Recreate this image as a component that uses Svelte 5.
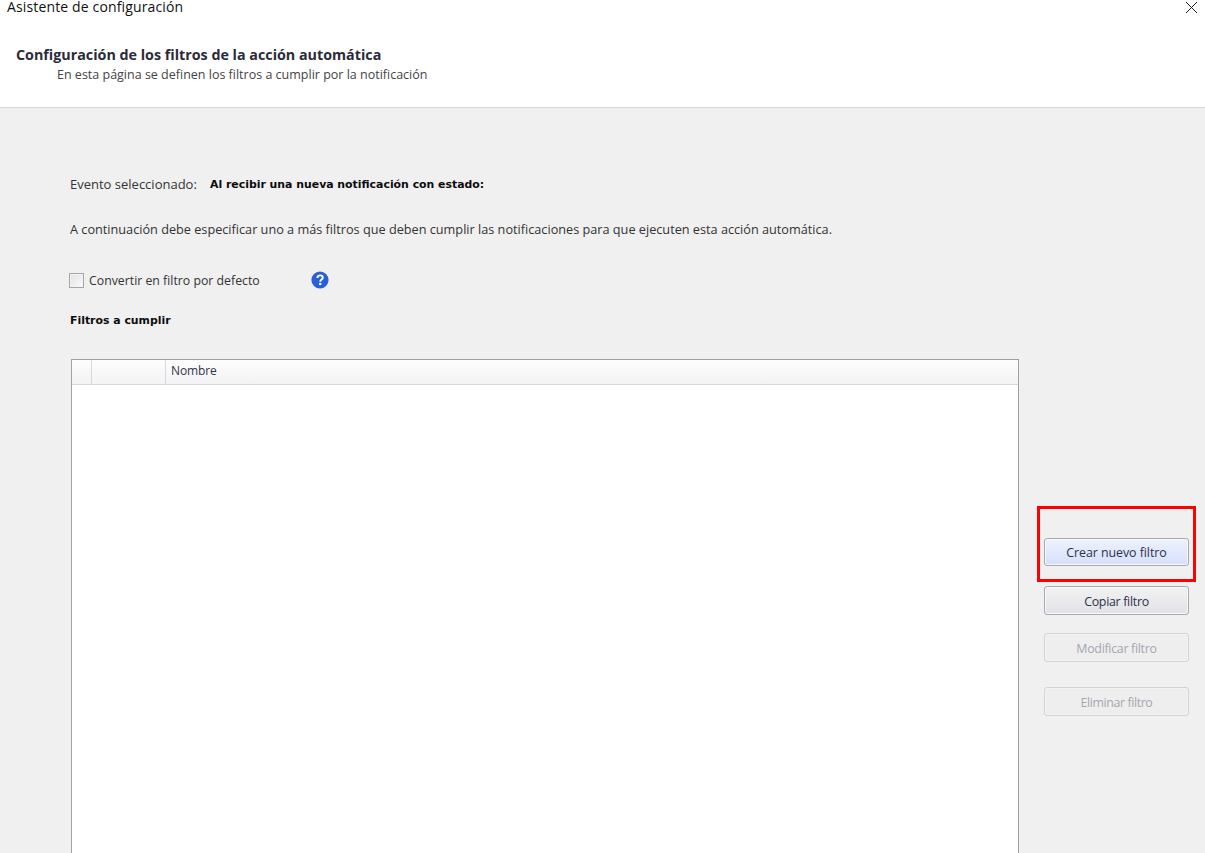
<script>
  const columns = [{ w: 20, label: "" }, { w: 74, label: "" }, { w: 0, label: "Nombre" }];
</script>

<div class="wizard">
  <div class="titlebar">
    <span class="wintitle">Asistente de configuración</span>
    <svg class="close" width="13" height="13" viewBox="0 0 13 13" aria-hidden="true">
      <path d="M1 1 L12 12 M12 1 L1 12" stroke="#1a1a1a" stroke-width="1" fill="none" />
    </svg>
  </div>

  <header class="head">
    <h1>Configuración de los filtros de la acción automática</h1>
    <p>En esta página se definen los filtros a cumplir por la notificación</p>
  </header>

  <main class="body">
    <div class="event">
      <span class="label">Evento seleccionado:</span>
      <strong>Al recibir una nueva notificación con estado:</strong>
    </div>
    <p class="info">A continuación debe especificar uno a más filtros que deben cumplir las notificaciones para que ejecuten esta acción automática.</p>

    <div class="default-row">
      <span class="check"></span>
      <span class="check-label">Convertir en filtro por defecto</span>
      <svg class="help" width="18" height="18" viewBox="0 0 18 18" aria-hidden="true">
        <circle cx="9" cy="9" r="8.6" fill="#2a5fd8" />
        <path d="M6.4 7 C6.4 5.3 7.6 4.4 9.1 4.4 C10.7 4.4 11.8 5.3 11.8 6.7 C11.8 8.5 9.2 8.7 9.2 10.7" stroke="#fff" stroke-width="1.9" fill="none" />
        <rect x="8.1" y="11.9" width="2.2" height="2.1" fill="#fff" />
      </svg>
    </div>

    <div class="section">Filtros a cumplir</div>

    <div class="content">
      <div class="table">
        <div class="thead">
          {#each columns as col}
            <div class="th" class:grow={!col.w} style={col.w ? `width:${col.w}px` : ""}>{col.label}</div>
          {/each}
        </div>
      </div>

      <div class="actions">
        <div class="highlight">
          <button class="btn primary">Crear nuevo filtro</button>
        </div>
        <button class="btn copy">Copiar filtro</button>
        <button class="btn edit" disabled>Modificar filtro</button>
        <button class="btn remove" disabled>Eliminar filtro</button>
      </div>
    </div>
  </main>
</div>

<style>
  :global(body) {
    margin: 0;
    background: #fff;
    overflow: hidden;
  }

  .wizard {
    width: 1205px;
    height: 853px;
    display: flex;
    flex-direction: column;
    overflow: hidden;
    font-family: "Open Sans", "Noto Sans", sans-serif;
    color: #333;
  }

  .titlebar {
    height: 46px;
    flex: none;
    display: flex;
    justify-content: space-between;
    align-items: flex-start;
    padding: 0 7px;
  }

  .wintitle {
    font-size: 14px;
    line-height: 14px;
    color: #111;
    letter-spacing: 0.14px;
  }

  .close {
    position: relative;
    top: 1px;
  }

  .head {
    height: 62px;
    flex: none;
    box-sizing: border-box;
    padding-left: 16px;
    border-bottom: 1px solid #d4d4d8;
  }

  .head h1 {
    margin: 0;
    font-size: 14.3px;
    line-height: 17px;
    font-weight: 700;
    color: #2b2b3a;
  }

  .head p {
    margin: 3px 0 0 41px;
    font-size: 12.5px;
    line-height: 17px;
    color: #444;
  }

  .body {
    flex: 1;
    min-height: 0;
    background: #f0f0f0;
    padding: 68px 0 0 70px;
    display: flex;
    flex-direction: column;
  }

  .event {
    display: flex;
    align-items: center;
    height: 16px;
  }

  .label {
    width: 140px;
    font-size: 13px;
    color: #333;
  }

  .event strong,
  .section {
    font-family: "DejaVu Sans", sans-serif;
    font-size: 10.9px;
    font-weight: 700;
    color: #0c0c0c;
  }

  .info {
    margin: 29px 0 0;
    font-size: 12.7px;
    line-height: 16px;
    color: #333;
    white-space: nowrap;
  }

  .default-row {
    display: flex;
    align-items: center;
    margin-top: 33px;
    margin-left: -1px;
    height: 20px;
  }

  .check {
    width: 13px;
    height: 13px;
    border: 1px solid #a5a5a8;
    background: linear-gradient(135deg, #e2e2e4, #fafafa);
    box-shadow: inset 0 0 0 1px #f2f2f2;
    margin-right: 5px;
    box-sizing: content-box;
  }

  .check-label {
    width: 222px;
    font-size: 12.3px;
    color: #333;
  }

  .section {
    margin-top: 23px;
    line-height: 16px;
  }

  .content {
    flex: 1;
    min-height: 0;
    display: flex;
    margin-top: 30px;
    padding-left: 1px;
  }

  .table {
    width: 948px;
    height: 520px;
    flex: none;
    box-sizing: border-box;
    background: #fff;
    border: 1px solid #a0a0a0;
    border-bottom: 0;
  }

  .thead {
    display: flex;
    height: 24px;
    background: linear-gradient(#fdfdfd, #f3f3f5);
    border-bottom: 1px solid #d8d8dc;
  }

  .th {
    box-sizing: border-box;
    border-right: 1px solid #d8d8dc;
    padding-left: 5px;
    font-size: 12px;
    line-height: 22px;
    color: #33334a;
    letter-spacing: -0.1px;
  }

  .th.grow {
    flex: 1;
    border-right: 0;
  }

  .actions {
    display: flex;
    flex-direction: column;
    align-items: flex-start;
    margin-left: 18px;
    padding-top: 147px;
  }

  .highlight {
    box-sizing: border-box;
    width: 159px;
    height: 76px;
    border: 3px solid #ff0000;
    padding: 29px 0 0 4px;
  }

  .btn {
    display: block;
    box-sizing: border-box;
    width: 145px;
    height: 29px;
    margin-left: 7px;
    padding: 1px 0 0;
    border: 1px solid #a9a9b0;
    border-radius: 3px;
    font-family: inherit;
    font-size: 12.4px;
    letter-spacing: -0.3px;
    color: #30304a;
    background: linear-gradient(#f2f2f2, #e1e2e6);
    box-shadow: inset 0 0 0 1px #f7f7f7;
  }

  .primary {
    margin-left: 0;
    height: 28px;
    padding: 0;
    letter-spacing: -0.06px;
    background: linear-gradient(#eef2fd, #d4e0fb);
  }

  .copy {
    margin-top: 4px;
  }

  .edit {
    margin-top: 18px;
  }

  .remove {
    margin-top: 25px;
    letter-spacing: -0.4px;
  }

  .btn:disabled {
    border-color: #d3d3d6;
    background: #eeeeee;
    color: #a6a6ae;
    box-shadow: inset 0 0 0 1px #f3f3f3;
  }
</style>
